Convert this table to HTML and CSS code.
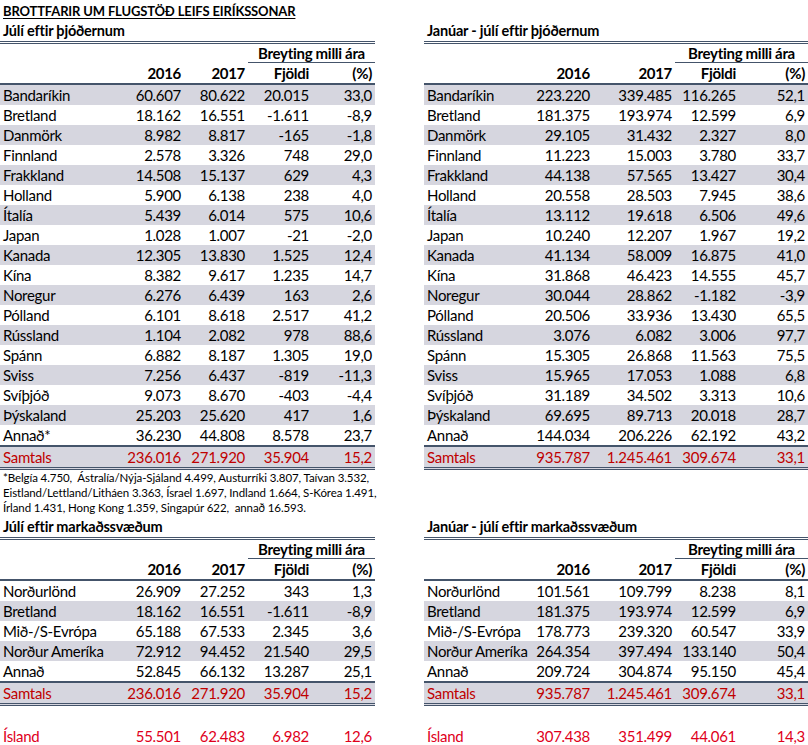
FILE: index.html
```html
<!DOCTYPE html>
<html lang="is">
<head>
<meta charset="utf-8">
<title>Brottfarir um Flugstöð Leifs Eiríkssonar</title>
<link rel="stylesheet" href="styles.css">
</head>
<body>
<div class="page">
  <h1 class="title">BROTTFARIR UM FLUGSTÖÐ LEIFS EIRÍKSSONAR</h1>
  <div class="grid">
    <section class="block">
      <div class="sub">Júlí eftir þjóðernum</div>
      <table class="data left">
        <colgroup><col class="c-l"><col class="c-a"><col class="c-b"><col class="c-c"><col class="c-d"></colgroup>
        <thead>
          <tr class="h1"><th></th><th></th><th></th><th colspan="2" class="brey">Breyting milli ára</th></tr>
          <tr class="h2"><th></th><th>2016</th><th>2017</th><th>Fjöldi</th><th>(%)</th></tr>
        </thead>
        <tbody>
          <tr class="alt"><td>Bandaríkin</td><td>60.607</td><td>80.622</td><td>20.015</td><td>33,0</td></tr>
          <tr><td>Bretland</td><td>18.162</td><td>16.551</td><td>-1.611</td><td>-8,9</td></tr>
          <tr class="alt"><td>Danmörk</td><td>8.982</td><td>8.817</td><td>-165</td><td>-1,8</td></tr>
          <tr><td>Finnland</td><td>2.578</td><td>3.326</td><td>748</td><td>29,0</td></tr>
          <tr class="alt"><td>Frakkland</td><td>14.508</td><td>15.137</td><td>629</td><td>4,3</td></tr>
          <tr><td>Holland</td><td>5.900</td><td>6.138</td><td>238</td><td>4,0</td></tr>
          <tr class="alt"><td>Ítalía</td><td>5.439</td><td>6.014</td><td>575</td><td>10,6</td></tr>
          <tr><td>Japan</td><td>1.028</td><td>1.007</td><td>-21</td><td>-2,0</td></tr>
          <tr class="alt"><td>Kanada</td><td>12.305</td><td>13.830</td><td>1.525</td><td>12,4</td></tr>
          <tr><td>Kína</td><td>8.382</td><td>9.617</td><td>1.235</td><td>14,7</td></tr>
          <tr class="alt"><td>Noregur</td><td>6.276</td><td>6.439</td><td>163</td><td>2,6</td></tr>
          <tr><td>Pólland</td><td>6.101</td><td>8.618</td><td>2.517</td><td>41,2</td></tr>
          <tr class="alt"><td>Rússland</td><td>1.104</td><td>2.082</td><td>978</td><td>88,6</td></tr>
          <tr><td>Spánn</td><td>6.882</td><td>8.187</td><td>1.305</td><td>19,0</td></tr>
          <tr class="alt"><td>Sviss</td><td>7.256</td><td>6.437</td><td>-819</td><td>-11,3</td></tr>
          <tr><td>Svíþjóð</td><td>9.073</td><td>8.670</td><td>-403</td><td>-4,4</td></tr>
          <tr class="alt"><td>Þýskaland</td><td>25.203</td><td>25.620</td><td>417</td><td>1,6</td></tr>
          <tr><td>Annað*</td><td>36.230</td><td>44.808</td><td>8.578</td><td>23,7</td></tr>
          <tr class="total"><td>Samtals</td><td>236.016</td><td>271.920</td><td>35.904</td><td>15,2</td></tr>
        </tbody>
      </table>
    </section>
    <section class="block">
      <div class="sub">Janúar - júlí eftir þjóðernum</div>
      <table class="data right">
        <colgroup><col class="r-l"><col class="r-a"><col class="r-b"><col class="r-c"><col class="r-d"></colgroup>
        <thead>
          <tr class="h1"><th></th><th></th><th></th><th colspan="2" class="brey">Breyting milli ára</th></tr>
          <tr class="h2"><th></th><th>2016</th><th>2017</th><th>Fjöldi</th><th>(%)</th></tr>
        </thead>
        <tbody>
          <tr class="alt"><td>Bandaríkin</td><td>223.220</td><td>339.485</td><td>116.265</td><td>52,1</td></tr>
          <tr><td>Bretland</td><td>181.375</td><td>193.974</td><td>12.599</td><td>6,9</td></tr>
          <tr class="alt"><td>Danmörk</td><td>29.105</td><td>31.432</td><td>2.327</td><td>8,0</td></tr>
          <tr><td>Finnland</td><td>11.223</td><td>15.003</td><td>3.780</td><td>33,7</td></tr>
          <tr class="alt"><td>Frakkland</td><td>44.138</td><td>57.565</td><td>13.427</td><td>30,4</td></tr>
          <tr><td>Holland</td><td>20.558</td><td>28.503</td><td>7.945</td><td>38,6</td></tr>
          <tr class="alt"><td>Ítalía</td><td>13.112</td><td>19.618</td><td>6.506</td><td>49,6</td></tr>
          <tr><td>Japan</td><td>10.240</td><td>12.207</td><td>1.967</td><td>19,2</td></tr>
          <tr class="alt"><td>Kanada</td><td>41.134</td><td>58.009</td><td>16.875</td><td>41,0</td></tr>
          <tr><td>Kína</td><td>31.868</td><td>46.423</td><td>14.555</td><td>45,7</td></tr>
          <tr class="alt"><td>Noregur</td><td>30.044</td><td>28.862</td><td>-1.182</td><td>-3,9</td></tr>
          <tr><td>Pólland</td><td>20.506</td><td>33.936</td><td>13.430</td><td>65,5</td></tr>
          <tr class="alt"><td>Rússland</td><td>3.076</td><td>6.082</td><td>3.006</td><td>97,7</td></tr>
          <tr><td>Spánn</td><td>15.305</td><td>26.868</td><td>11.563</td><td>75,5</td></tr>
          <tr class="alt"><td>Sviss</td><td>15.965</td><td>17.053</td><td>1.088</td><td>6,8</td></tr>
          <tr><td>Svíþjóð</td><td>31.189</td><td>34.502</td><td>3.313</td><td>10,6</td></tr>
          <tr class="alt"><td>Þýskaland</td><td>69.695</td><td>89.713</td><td>20.018</td><td>28,7</td></tr>
          <tr><td>Annað</td><td>144.034</td><td>206.226</td><td>62.192</td><td>43,2</td></tr>
          <tr class="total"><td>Samtals</td><td>935.787</td><td>1.245.461</td><td>309.674</td><td>33,1</td></tr>
        </tbody>
      </table>
    </section>

    <p class="note">*Belgía 4.750,&nbsp; Ástralía/Nýja-Sjáland 4.499, Austurríki 3.807, Taívan 3.532,<br>Eistland/Lettland/Litháen 3.363, Ísrael 1.697, Indland 1.664, S-Kórea 1.491,<br>Írland 1.431, Hong Kong 1.359, Singapúr 622,&nbsp; annað 16.593.</p>
    <div class="note-empty"></div>

    <section class="block">
      <div class="sub">Júlí eftir markaðssvæðum</div>
      <table class="data left">
        <colgroup><col class="c-l"><col class="c-a"><col class="c-b"><col class="c-c"><col class="c-d"></colgroup>
        <thead>
          <tr class="h1"><th></th><th></th><th></th><th colspan="2" class="brey">Breyting milli ára</th></tr>
          <tr class="h2"><th></th><th>2016</th><th>2017</th><th>Fjöldi</th><th>(%)</th></tr>
        </thead>
        <tbody>
          <tr><td>Norðurlönd</td><td>26.909</td><td>27.252</td><td>343</td><td>1,3</td></tr>
          <tr class="alt"><td>Bretland</td><td>18.162</td><td>16.551</td><td>-1.611</td><td>-8,9</td></tr>
          <tr><td>Mið-/S-Evrópa</td><td>65.188</td><td>67.533</td><td>2.345</td><td>3,6</td></tr>
          <tr class="alt"><td>Norður Ameríka</td><td>72.912</td><td>94.452</td><td>21.540</td><td>29,5</td></tr>
          <tr><td>Annað</td><td>52.845</td><td>66.132</td><td>13.287</td><td>25,1</td></tr>
          <tr class="total"><td>Samtals</td><td>236.016</td><td>271.920</td><td>35.904</td><td>15,2</td></tr>
          <tr class="spacer"><td colspan="5"></td></tr>
          <tr class="island"><td>Ísland</td><td>55.501</td><td>62.483</td><td>6.982</td><td>12,6</td></tr>
        </tbody>
      </table>
    </section>
    <section class="block">
      <div class="sub">Janúar - júlí eftir markaðssvæðum</div>
      <table class="data right">
        <colgroup><col class="r-l"><col class="r-a"><col class="r-b"><col class="r-c"><col class="r-d"></colgroup>
        <thead>
          <tr class="h1"><th></th><th></th><th></th><th colspan="2" class="brey">Breyting milli ára</th></tr>
          <tr class="h2"><th></th><th>2016</th><th>2017</th><th>Fjöldi</th><th>(%)</th></tr>
        </thead>
        <tbody>
          <tr><td>Norðurlönd</td><td>101.561</td><td>109.799</td><td>8.238</td><td>8,1</td></tr>
          <tr class="alt"><td>Bretland</td><td>181.375</td><td>193.974</td><td>12.599</td><td>6,9</td></tr>
          <tr><td>Mið-/S-Evrópa</td><td>178.773</td><td>239.320</td><td>60.547</td><td>33,9</td></tr>
          <tr class="alt"><td>Norður Ameríka</td><td>264.354</td><td>397.494</td><td>133.140</td><td>50,4</td></tr>
          <tr><td>Annað</td><td>209.724</td><td>304.874</td><td>95.150</td><td>45,4</td></tr>
          <tr class="total"><td>Samtals</td><td>935.787</td><td>1.245.461</td><td>309.674</td><td>33,1</td></tr>
          <tr class="spacer"><td colspan="5"></td></tr>
          <tr class="island"><td>Ísland</td><td>307.438</td><td>351.499</td><td>44.061</td><td>14,3</td></tr>
        </tbody>
      </table>
    </section>
  </div>
</div>
</body>
</html>
```

FILE: styles.css
```css
html, body {
  margin: 0;
  padding: 0;
  background: #ffffff;
}

body {
  font-family: Lato, "Open Sans", "Liberation Sans", sans-serif;
  color: #000000;
  overflow: hidden;
}

.page {
  width: 808px;
}

.title {
  margin: 0;
  box-sizing: border-box;
  height: 21px;
  line-height: 22px;
  padding-left: 3px;
  font-size: 13px;
  font-weight: 700;
  letter-spacing: -0.15px;
  text-decoration: underline;
  text-underline-offset: 2px;
  text-decoration-thickness: 1px;
  overflow: hidden;
}

.grid {
  display: grid;
  grid-template-columns: 375px 384px;
  column-gap: 49px;
}

.sub {
  box-sizing: border-box;
  height: 23px;
  line-height: 20px;
  padding-left: 3px;
  font-size: 14.5px;
  font-weight: 700;
  letter-spacing: -0.2px;
  border-bottom: 3px double #44546a;
}

.data {
  border-collapse: separate;
  border-spacing: 0;
  table-layout: fixed;
  width: 100%;
  font-size: 15px;
  letter-spacing: -0.3px;
}

.c-l { width: 120px; }
.c-a { width: 64px; }
.c-b { width: 64px; }
.c-c { width: 64px; }
.c-d { width: 63px; }

.r-l { width: 101px; }
.r-a { width: 68px; }
.r-b { width: 82px; }
.r-c { width: 64px; }
.r-d { width: 69px; }

.data tr {
  height: 20px;
}

.data th,
.data td {
  padding: 0 3px;
  line-height: 16px;
  white-space: nowrap;
  text-align: right;
  vertical-align: middle;
}

.data td:first-child {
  text-align: left;
}

.data th {
  font-weight: 700;
}

.data tr.h1 {
  height: 19px;
}

.data .h1 .brey {
  text-align: center;
  border-bottom: 1px solid #44546a;
}

.data tr.h2 {
  height: 22px;
}

.data .h2 th {
  border-bottom: 2px solid #44546a;
}

.data tr.alt td {
  background: #d6d6df;
}

.data tr.total {
  height: 25px;
}

.data tr.total td {
  background: #d6d6df;
  color: #c00000;
  border-top: 2px solid #44546a;
  border-bottom: 3px double #44546a;
}

.data tr.spacer {
  height: 20px;
}

.data tr.island td {
  color: #e0001b;
}

.note {
  margin: 0;
  box-sizing: border-box;
  height: 47px;
  padding-left: 3px;
  font-size: 11.5px;
  letter-spacing: -0.1px;
  line-height: 15px;
  white-space: nowrap;
}

.note-empty {
  height: 47px;
}
```
